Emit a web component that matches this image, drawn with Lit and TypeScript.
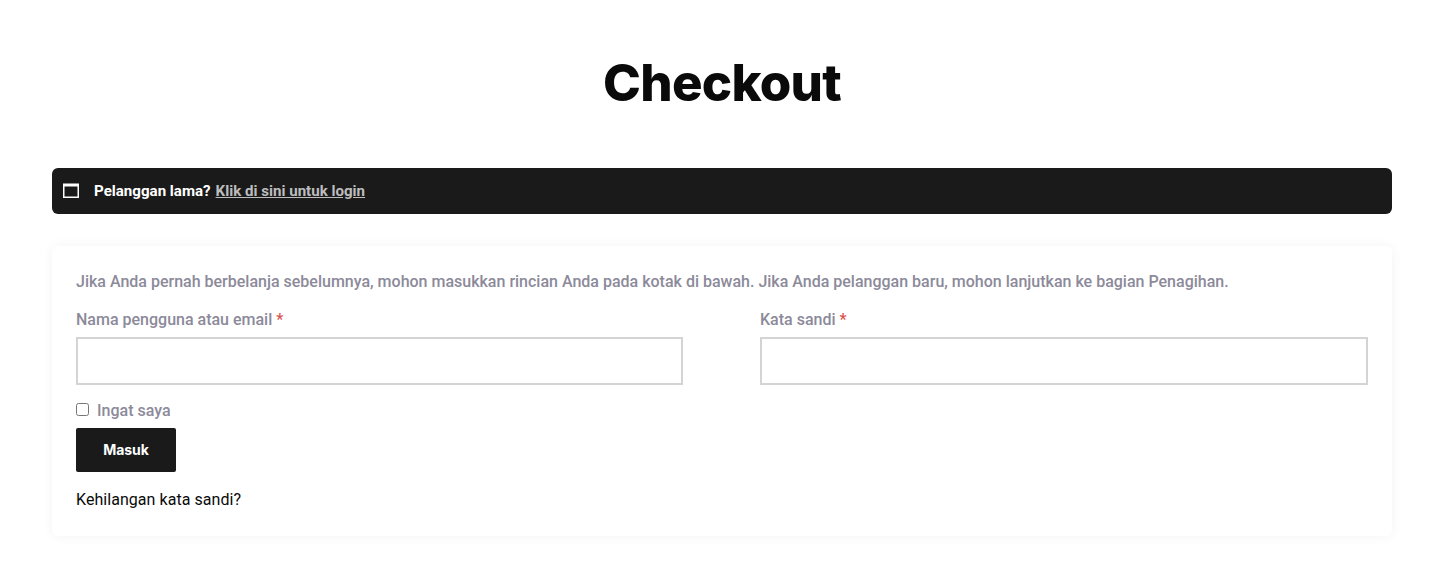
import { LitElement, html, css } from 'lit'
import { customElement } from 'lit/decorators.js'

@customElement('app-root')
export class AppRoot extends LitElement {
  static styles = css`
    :host {
      display: block;
      height: 561px;
      background: #fff;
      font-family: Roboto, 'Liberation Sans', sans-serif;
      font-size: 16px;
      color: #8c8a9a;
      box-sizing: border-box;
      padding: 0 50px 0 52px;
    }
    h1 {
      margin: 0;
      padding-top: 53px;
      height: 168px;
      box-sizing: border-box;
      text-align: center;
      font-family: Inter, sans-serif;
      font-weight: 800;
      font-size: 51px;
      line-height: 60px;
      letter-spacing: -0.75px;
      color: #0a0a0a;
    }
    .notice {
      display: flex;
      align-items: center;
      height: 46px;
      padding-left: 11px;
      background: #1a1a1b;
      border-radius: 6px;
      color: #fff;
      font-size: 15.1px;
      font-weight: 700;
    }
    .notice svg {
      display: block;
      margin-right: 15px;
    }
    .notice a {
      margin-left: 5px;
      color: #bdbdbd;
      text-decoration: underline;
    }
    .card {
      margin-top: 32px;
      height: 290px;
      box-sizing: border-box;
      padding: 24px 24px 0;
      border-radius: 6px;
      box-shadow: 0 0 12px rgba(0, 0, 0, 0.05);
      font-weight: 500;
    }
    .intro {
      margin: 0;
      line-height: 24px;
    }
    .fields {
      display: grid;
      grid-template-columns: 607px 608px;
      justify-content: space-between;
      margin-top: 14px;
    }
    label {
      display: block;
      line-height: 24px;
    }
    .req {
      color: #d9534f;
    }
    .field input {
      display: block;
      width: 100%;
      height: 48px;
      margin-top: 5px;
      box-sizing: border-box;
      border: 2px solid #d4d4d6;
      background: #fff;
      outline: none;
    }
    .remember {
      display: flex;
      align-items: center;
      margin-top: 14px;
      height: 24px;
    }
    .remember input {
      width: 13px;
      height: 13px;
      margin: 0 8px 4px 0;
    }
    button {
      display: block;
      width: 100px;
      height: 44px;
      margin-top: 5px;
      border: none;
      border-radius: 2px;
      background: #1a1a1b;
      color: #fff;
      font-family: Inter, sans-serif;
      font-weight: 700;
      font-size: 14px;
      letter-spacing: -0.1px;
      padding: 0 0 2px;
    }
    .lost {
      display: block;
      margin-top: 16px;
      line-height: 24px;
      color: #0a0a0a;
      font-weight: 400;
      letter-spacing: 0.05px;
      text-decoration: none;
    }
  `

  render () {
    return html`
      <h1>Checkout</h1>
      <div class="notice">
        <svg width="16" height="16" viewBox="0 0 16 16" aria-hidden="true">
          <path fill="#fff" fill-rule="evenodd" d="M0 .5h16V15H0zM1.500 3.500v10h13v-10z"/>
        </svg>
        <span>Pelanggan lama?</span>
        <a href="#">Klik di sini untuk login</a>
      </div>
      <div class="card">
        <p class="intro">Jika Anda pernah berbelanja sebelumnya, mohon masukkan rincian Anda pada kotak di bawah. Jika Anda pelanggan baru, mohon lanjutkan ke bagian Penagihan.</p>
        <div class="fields">
          <div class="field">
            <label>Nama pengguna atau email <span class="req">*</span></label>
            <input type="text">
          </div>
          <div class="field">
            <label>Kata sandi <span class="req">*</span></label>
            <input type="password">
          </div>
        </div>
        <label class="remember"><input type="checkbox">Ingat saya</label>
        <button>Masuk</button>
        <a class="lost" href="#">Kehilangan kata sandi?</a>
      </div>
    `
  }
}
